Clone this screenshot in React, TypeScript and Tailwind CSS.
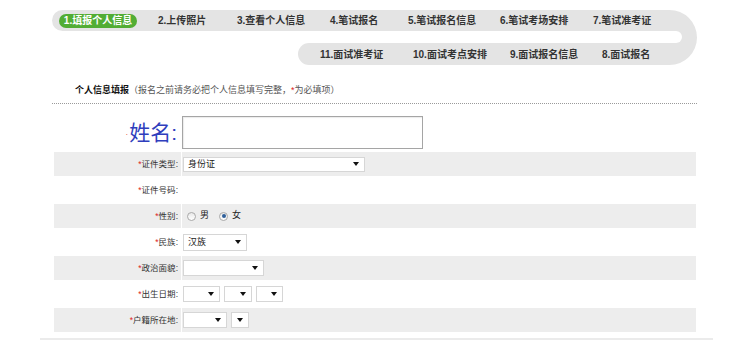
import type { ReactNode } from "react";

const cjk = "font-['Liberation_Sans','Noto_Sans_CJK_SC',sans-serif]";

const topSteps = [
  { label: "2.上传照片", w: "w-[79px]" },
  { label: "3.查看个人信息", w: "w-[93px]" },
  { label: "4.笔试报名", w: "w-[78px]" },
  { label: "5.笔试报名信息", w: "w-[92px]" },
  { label: "6.笔试考场安排", w: "w-[93px]" },
  { label: "7.笔试准考证", w: "w-[60px]" },
];

const bottomSteps = [
  { label: "11.面试准考证", w: "w-[93px]" },
  { label: "10.面试考点安排", w: "w-[97px]" },
  { label: "9.面试报名信息", w: "w-[92px]" },
  { label: "8.面试报名", w: "w-[60px]" },
];

function Select({ className, text }: { className: string; text?: string }) {
  return (
    <div className={`flex items-center justify-between bg-white border border-[#d6d6d6] pl-[4px] pr-[5px] ${className}`}>
      <span className="text-[9px] text-[#222] leading-none">{text}</span>
      <span className="w-0 h-0 border-l-[3px] border-r-[3px] border-t-[4px] border-l-transparent border-r-transparent border-t-[#111]" />
    </div>
  );
}

function Radio({ checked }: { checked?: boolean }) {
  return (
    <span className="w-[9px] h-[9px] rounded-full border border-[#a9a9a9] bg-gradient-to-b from-[#e8e8e8] to-white flex items-center justify-center">
      {checked && <span className="w-[4px] h-[4px] rounded-full bg-[#2f5f9a]" />}
    </span>
  );
}

function Row({ label, gray, tall, children }: { label: string; gray?: boolean; tall?: boolean; children?: ReactNode }) {
  const bg = gray ? "bg-[#ededed]" : "bg-white";
  return (
    <div className={`flex ${tall ? "h-[28px]" : "h-[24px]"}`}>
      <div className={`w-[127px] ${bg} flex items-center justify-end pr-[3px] text-[8.5px] text-[#333]`}>
        <span className="text-[#d22]">*</span>
        {label}:
      </div>
      <div className={`flex-1 ml-[1px] ${bg} flex items-center gap-[4px] pl-[1px]`}>{children}</div>
    </div>
  );
}

export default function App() {
  return (
    <div className={`w-[738px] h-[362px] bg-white overflow-hidden pt-[10px] ${cjk}`}>
      {/* progress track */}
      <div className="ml-[52px] w-[645px] h-[55px] rounded-r-[28px] overflow-hidden flex flex-col">
        <div className="h-[21px] bg-[#e4e4e4] rounded-l-full flex items-center text-[10px] font-bold text-[#333]">
          <span className="ml-[7px] w-[78px] h-[14px] rounded-full bg-[#52ad34] text-white flex items-center justify-center">
            1.填报个人信息
          </span>
          <span className="w-[21px]" />
          {topSteps.map(s => (
            <span key={s.label} className={`${s.w} whitespace-nowrap`}>{s.label}</span>
          ))}
        </div>
        <div className="h-[12px] bg-[#e4e4e4] flex">
          <div className="w-[630px] bg-white rounded-r-full" />
        </div>
        <div className="h-[22px] flex">
          <div className="w-[246px] bg-white" />
          <div className="flex-1 bg-[#e4e4e4] rounded-l-full flex items-center pl-[22px] text-[10px] font-bold text-[#333]">
            {bottomSteps.map(s => (
              <span key={s.label} className={`${s.w} whitespace-nowrap`}>{s.label}</span>
            ))}
          </div>
        </div>
      </div>

      {/* title */}
      <div className="mt-[20px] ml-[75px] h-[12px] flex items-center text-[9px] whitespace-nowrap">
        <span className="font-bold text-[#111]">个人信息填报</span>
        <span className="text-[#555]">（报名之前请务必把个人信息填写完整，<span className="text-[#d22]">*</span>为必填项）</span>
      </div>
      <div className="mt-[6px] ml-[52px] w-[645px] border-t border-dotted border-[#9a9a9a]" />

      {/* name */}
      <div className="mt-[12px] ml-[54px] flex h-[33px]">
        <div className="w-[128px] flex items-center justify-end pr-[5px] text-[#2f3ebd]">
          <span className="text-[#d22] text-[8px] mr-[1px] mt-[4px]">·</span>
          <span className="text-[21px] leading-none">姓名:</span>
        </div>
        <div className="w-[241px] h-[33px] border border-[#a5a5a5] bg-white shadow-[inset_1px_1px_1px_rgba(0,0,0,0.08)]" />
      </div>

      {/* rows */}
      <div className="mt-[3px] ml-[54px] w-[642px] flex flex-col">
        <Row label="证件类型" gray>
          <Select className="w-[182px] h-[15px]" text="身份证" />
        </Row>
        <Row label="证件号码" tall />
        <Row label="性别" gray>
          <span className="ml-[0px]" />
          <Radio />
          <span className="text-[9px] text-[#222] mr-[6px]">男</span>
          <Radio checked />
          <span className="text-[9px] text-[#222]">女</span>
        </Row>
        <Row label="民族" tall>
          <Select className="w-[64px] h-[17px]" text="汉族" />
        </Row>
        <Row label="政治面貌" gray>
          <Select className="w-[81px] h-[16px]" />
        </Row>
        <Row label="出生日期" tall>
          <Select className="w-[37px] h-[16px]" />
          <Select className="w-[28px] h-[16px]" />
          <Select className="w-[27px] h-[16px]" />
        </Row>
        <Row label="户籍所在地" gray>
          <Select className="w-[44px] h-[16px]" />
          <Select className="w-[18px] h-[16px]" />
        </Row>
      </div>
      <div className="mt-[6px] ml-[40px] w-[673px] h-[2px] bg-[#ebebeb]" />
    </div>
  );
}
